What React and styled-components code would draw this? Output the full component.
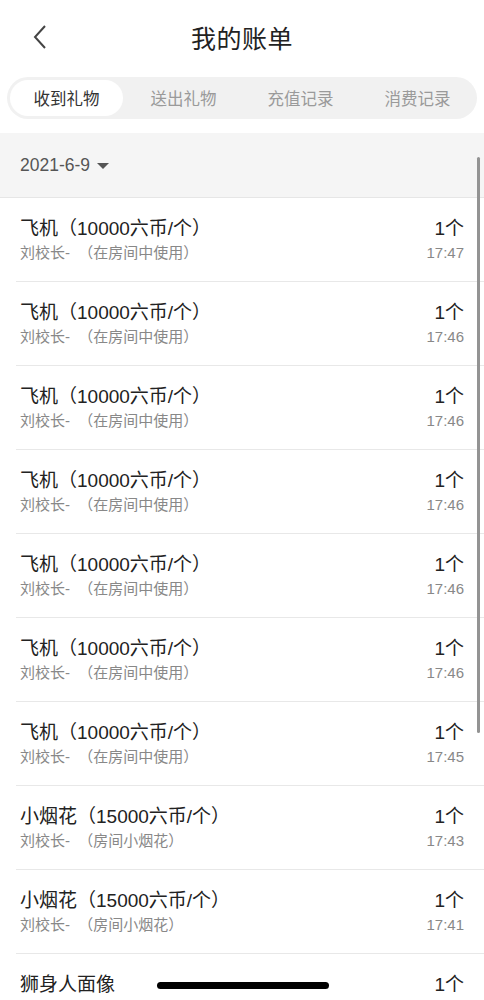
import React from "react";
import styled, { createGlobalStyle } from "styled-components";

const GlobalStyle = createGlobalStyle`
  html, body {
    margin: 0;
    padding: 0;
    background: #fff;
  }
  body {
    font-family: "Liberation Sans", "Noto Sans CJK SC", sans-serif;
  }
  * {
    box-sizing: border-box;
  }
`;

const Page = styled.div`
  position: relative;
  width: 484px;
  height: 1000px;
  overflow: hidden;
  background: #fff;
`;

const Header = styled.div`
  position: relative;
  height: 74px;
  display: flex;
  align-items: center;
  justify-content: center;
`;

const BackButton = styled.button`
  position: absolute;
  left: 26px;
  top: 22px;
  width: 28px;
  height: 30px;
  padding: 0;
  border: none;
  background: none;
  display: flex;
  align-items: center;
  justify-content: center;
`;

const Title = styled.h1`
  margin: 0;
  font-size: 25px;
  font-weight: 400;
  color: #222;
  letter-spacing: 0.5px;
`;

const Tabs = styled.div`
  margin: 3px 7px 0;
  height: 42px;
  border-radius: 21px;
  background: #f1f1f1;
  padding: 3px;
  display: grid;
  grid-template-columns: repeat(4, 1fr);
  gap: 4px;
`;

const Tab = styled.div`
  display: flex;
  align-items: center;
  justify-content: center;
  border-radius: 18px;
  font-size: 16.5px;
  color: ${(p) => (p.$active ? "#333" : "#9a9a9a")};
  background: ${(p) => (p.$active ? "#fff" : "transparent")};
`;

const DateBar = styled.div`
  margin-top: 14px;
  height: 65px;
  background: #f5f5f5;
  border-bottom: 1px solid #e6e6e6;
  display: flex;
  align-items: center;
  padding: 0 20px;
  gap: 7px;
  font-size: 17.5px;
  color: #555;
`;

const Caret = styled.span`
  width: 0;
  height: 0;
  border-left: 6px solid transparent;
  border-right: 6px solid transparent;
  border-top: 6px solid #555;
  margin-top: 1px;
`;

const List = styled.div`
  display: flex;
  flex-direction: column;
  padding-left: 16px;
`;

const Row = styled.div`
  height: 84px;
  border-bottom: 1px solid #e8e8e8;
  display: flex;
  justify-content: space-between;
  padding: 18px 20px 0 4px;
`;

const Col = styled.div`
  display: flex;
  flex-direction: column;
  align-items: ${(p) => (p.$right ? "flex-end" : "flex-start")};
  gap: 2px;
`;

const Name = styled.div`
  font-size: 19px;
  line-height: 25px;
  color: #222;
`;

const Sub = styled.div`
  font-size: 15px;
  line-height: 20px;
  color: #888;
  white-space: pre;
`;

const Scrollbar = styled.div`
  position: absolute;
  left: 477px;
  top: 157px;
  width: 3px;
  height: 576px;
  border-radius: 2px;
  background: #939393;
`;

const HomeIndicator = styled.div`
  position: absolute;
  left: 157px;
  bottom: 11px;
  width: 172px;
  height: 7px;
  border-radius: 4px;
  background: #000;
`;

const plane = { name: "飞机（10000六币/个）", sub: "刘校长-  （在房间中使用）" };
const firework = { name: "小烟花（15000六币/个）", sub: "刘校长-  （房间小烟花）" };

const records = [
  { ...plane, time: "17:47" },
  { ...plane, time: "17:46" },
  { ...plane, time: "17:46" },
  { ...plane, time: "17:46" },
  { ...plane, time: "17:46" },
  { ...plane, time: "17:46" },
  { ...plane, time: "17:45" },
  { ...firework, time: "17:43" },
  { ...firework, time: "17:41" },
  { name: "狮身人面像" },
];

const tabs = ["收到礼物", "送出礼物", "充值记录", "消费记录"];

export default function App() {
  return (
    <Page>
      <GlobalStyle />
      <Header>
        <BackButton>
          <svg width="16" height="26" viewBox="0 0 16 26">
            <path d="M13 2 L3 13 L13 24" fill="none" stroke="#444" strokeWidth="2" />
          </svg>
        </BackButton>
        <Title>我的账单</Title>
      </Header>
      <Tabs>
        {tabs.map((t, i) => (
          <Tab key={t} $active={i === 0}>
            {t}
          </Tab>
        ))}
      </Tabs>
      <DateBar>
        2021-6-9
        <Caret />
      </DateBar>
      <List>
        {records.map((r, i) => (
          <Row key={i}>
            <Col>
              <Name>{r.name}</Name>
              {r.sub && <Sub>{r.sub}</Sub>}
            </Col>
            <Col $right>
              <Name>1个</Name>
              {r.time && <Sub>{r.time}</Sub>}
            </Col>
          </Row>
        ))}
      </List>
      <Scrollbar />
      <HomeIndicator />
    </Page>
  );
}
